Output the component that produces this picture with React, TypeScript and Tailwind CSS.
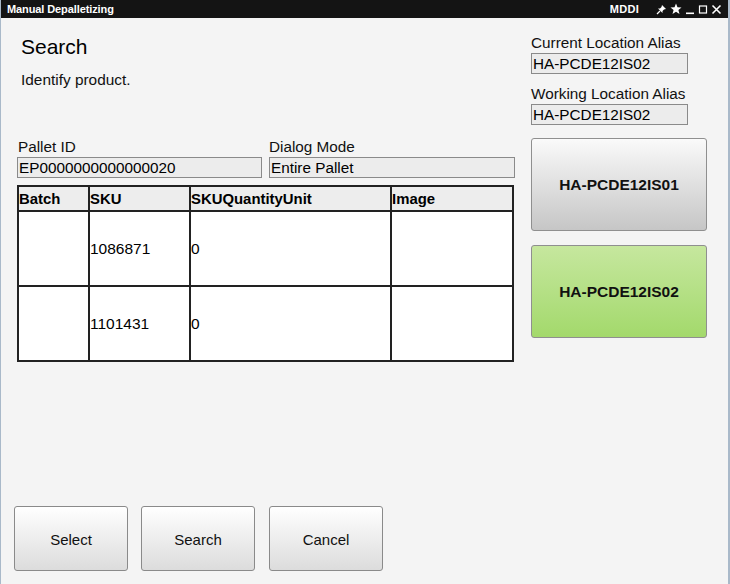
import React from "react";

const font = { fontFamily: '"Liberation Sans", Arial, sans-serif' };

function TitleIcons() {
  return (
    <div className="flex items-center gap-[3px] text-white">
      <svg width="11" height="11" viewBox="0 0 11 11">
        <path d="M6 1 L10 5 L8 5.5 L6.5 7 L6.5 9 L2 4.5 L4 4.5 L5.5 3 Z" fill="white" />
        <path d="M4 7 L1 10" stroke="white" strokeWidth="1.2" />
      </svg>
      <svg width="12" height="12" viewBox="0 0 12 12">
        <path d="M6 0.5 L7.5 4.3 L11.5 4.5 L8.4 7 L9.5 11 L6 8.7 L2.5 11 L3.6 7 L0.5 4.5 L4.5 4.3 Z" fill="white" />
      </svg>
      <svg width="10" height="11" viewBox="0 0 10 11">
        <rect x="1" y="8.5" width="8" height="1.6" fill="white" />
      </svg>
      <svg width="10" height="11" viewBox="0 0 10 11">
        <rect x="1.5" y="2" width="7" height="7" fill="none" stroke="white" strokeWidth="1.2" />
      </svg>
      <svg width="11" height="11" viewBox="0 0 11 11">
        <path d="M1.5 1.5 L9.5 9.5 M9.5 1.5 L1.5 9.5" stroke="white" strokeWidth="1.6" />
      </svg>
    </div>
  );
}

function Field({ value, className }: { value: string; className: string }) {
  return (
    <div
      className={`h-[21px] border border-[#8a8a8a] bg-[#ececec] text-[15.3px] leading-[19px] pl-[1px] text-black ${className}`}
    >
      {value}
    </div>
  );
}

function BigButton({ label, green }: { label: string; green?: boolean }) {
  return (
    <div
      className={`h-[93px] w-[176px] rounded-[3px] border border-[#8f8f8f] flex items-center justify-center text-[15.5px] font-bold text-[#111] ${
        green
          ? "bg-gradient-to-b from-[#c6e79e] to-[#a3d96b]"
          : "bg-gradient-to-b from-[#fafafa] to-[#c6c6c6]"
      }`}
    >
      {label}
    </div>
  );
}

function BottomButton({ label }: { label: string }) {
  return (
    <div className="h-[65px] w-[114px] pt-[3px] rounded-[3px] border border-[#8a8a8a] bg-gradient-to-b from-[#ffffff] to-[#dcdcdc] flex items-center justify-center text-[15px] text-[#111]">
      {label}
    </div>
  );
}

const rows = [
  { batch: "", sku: "1086871", qty: "0", image: "" },
  { batch: "", sku: "1101431", qty: "0", image: "" },
];

export default function App() {
  return (
    <div
      style={font}
      className="w-[730px] h-[584px] flex flex-col bg-[#f4f4f4] border-l border-r-[2px] border-[#a9b9c9] box-border overflow-hidden"
    >
      <div className="h-[18px] bg-[#141414] flex items-center justify-between pl-[6px] pr-[6px] shrink-0">
        <span className="text-white font-bold text-[11px] tracking-[-0.1px]">Manual Depalletizing</span>
        <div className="flex items-center gap-[17px]">
          <span className="text-white font-bold text-[11px] tracking-[0.3px]">MDDI</span>
          <TitleIcons />
        </div>
      </div>

      <div className="flex-1 flex flex-col">
        <div className="flex">
          <div className="w-[530px] pl-[16px] flex flex-col">
            <div className="pl-[4px] pt-[17px] text-[21px] leading-[24px] text-black">Search</div>
            <div className="pl-[4px] pt-[12px] text-[15.4px] leading-[18px] text-[#111]">Identify product.</div>
            <div className="flex gap-[7px] mt-[49px]">
              <div className="flex flex-col">
                <div className="pl-[1px] text-[15.3px] leading-[18px] text-[#111]">Pallet ID</div>
                <Field value="EP0000000000000020" className="w-[245px] mt-[1px]" />
              </div>
              <div className="flex flex-col">
                <div className="text-[15.3px] leading-[18px] text-[#111]">Dialog Mode</div>
                <Field value="Entire Pallet" className="w-[246px] mt-[1px]" />
              </div>
            </div>
            <table className="mt-[7px] w-[497px] border-collapse border-[2px] border-[#222] bg-white text-[15.5px] text-black">
              <thead>
                <tr className="h-[25px] bg-[#ededed]">
                  <th className="w-[71px] border-[2px] border-[#222] text-left font-bold text-[14.9px] leading-[16px] p-0">Batch</th>
                  <th className="w-[101px] border-[2px] border-[#222] text-left font-bold text-[14.9px] leading-[16px] p-0">SKU</th>
                  <th className="w-[201px] border-[2px] border-[#222] text-left font-bold text-[14.9px] leading-[16px] p-0">SKUQuantityUnit</th>
                  <th className="border-[2px] border-[#222] text-left font-bold text-[14.9px] leading-[16px] p-0">Image</th>
                </tr>
              </thead>
              <tbody>
                {rows.map((r, i) => (
                  <tr key={i} className="h-[75px]">
                    <td className="border-[2px] border-[#222] p-0">{r.batch}</td>
                    <td className="border-[2px] border-[#222] p-0">{r.sku}</td>
                    <td className="border-[2px] border-[#222] p-0">{r.qty}</td>
                    <td className="border-[2px] border-[#222] p-0">{r.image}</td>
                  </tr>
                ))}
              </tbody>
            </table>
          </div>

          <div className="flex flex-col pt-[16px]">
            <div className="text-[15.3px] leading-[18px] text-[#111]">Current Location Alias</div>
            <Field value="HA-PCDE12IS02" className="w-[157px] mt-[1px]" />
            <div className="text-[15.3px] leading-[18px] text-[#111] mt-[11px]">Working Location Alias</div>
            <Field value="HA-PCDE12IS02" className="w-[157px] mt-[1px]" />
            <div className="mt-[13px] flex flex-col gap-[14px]">
              <BigButton label="HA-PCDE12IS01" />
              <BigButton label="HA-PCDE12IS02" green />
            </div>
          </div>
        </div>

        <div className="mt-auto flex gap-[13px] pl-[13px] pb-[13px]">
          <BottomButton label="Select" />
          <BottomButton label="Search" />
          <div className="ml-[1px]">
            <BottomButton label="Cancel" />
          </div>
        </div>
      </div>
    </div>
  );
}
